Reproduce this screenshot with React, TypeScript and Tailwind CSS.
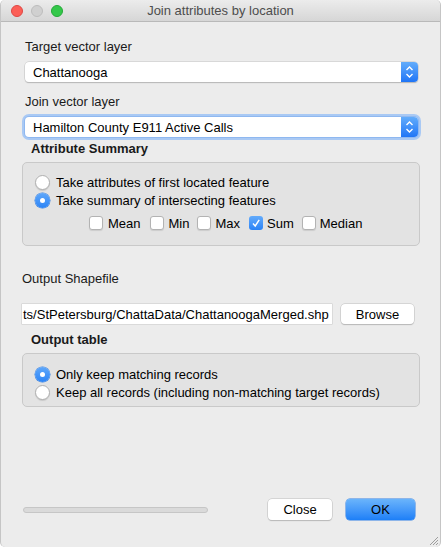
import React from "react";

const font = { fontFamily: '"Liberation Sans", Arial, sans-serif' };

function Stepper() {
  return (
    <div className="w-[17px] h-full rounded-r-[4px] bg-gradient-to-b from-[#62acfb] to-[#1f75f6] flex items-center justify-center">
      <svg width="9" height="14" viewBox="0 0 9 14">
        <path d="M1.5 5 L4.5 2 L7.5 5" fill="none" stroke="white" strokeWidth="1.4" />
        <path d="M1.5 9 L4.5 12 L7.5 9" fill="none" stroke="white" strokeWidth="1.4" />
      </svg>
    </div>
  );
}

function Combo({ text, focus }: { text: string; focus?: boolean }) {
  return (
    <div
      className={
        "h-[20px] flex items-stretch bg-white rounded-[4px] " +
        (focus
          ? "shadow-[0_0_0_1px_#8fb8f0,0_0_0_3px_#a9c9f4]"
          : "shadow-[0_0_0_0.5px_#c4c4c4,0_1px_1px_#adadad]")
      }
    >
      <div className="flex-1 pl-[8px] flex items-center text-[13px] text-black leading-none">{text}</div>
      <Stepper />
    </div>
  );
}

function Radio({ checked }: { checked?: boolean }) {
  return checked ? (
    <div className="w-[15px] h-[15px] rounded-full bg-gradient-to-b from-[#5ea7fa] to-[#2b84f6] flex items-center justify-center shadow-[0_0_0_0.5px_#3c83e0]">
      <div className="w-[5px] h-[5px] rounded-full bg-white" />
    </div>
  ) : (
    <div className="w-[15px] h-[15px] rounded-full bg-white border border-[#b0b0b0] shadow-[0_1px_1px_rgba(0,0,0,0.12)]" />
  );
}

function Check({ checked }: { checked?: boolean }) {
  return checked ? (
    <div className="w-[14px] h-[14px] rounded-[3px] bg-gradient-to-b from-[#63abfb] to-[#2a83f6] flex items-center justify-center">
      <svg width="10" height="10" viewBox="0 0 10 10">
        <path d="M2 5.5 L4.2 8 L8.2 1.8" fill="none" stroke="white" strokeWidth="1.4" />
      </svg>
    </div>
  ) : (
    <div className="w-[14px] h-[14px] rounded-[3px] bg-white border border-[#b3b3b3] shadow-[0_1px_1px_rgba(0,0,0,0.1)]" />
  );
}

function RadioRow({ checked, label }: { checked?: boolean; label: string }) {
  return (
    <div className="h-[18px] flex items-center">
      <div className="ml-[12px] w-[15px]">
        <Radio checked={checked} />
      </div>
      <span className="ml-[6px] text-[13px] text-black leading-none">{label}</span>
    </div>
  );
}

export default function App() {
  return (
    <div className="w-[442px] h-[547px] bg-white overflow-hidden" style={font}>
      <div className="relative w-[441px] h-[547px] rounded-[5px] bg-[#ececec] border-l border-r border-[#c5c5c5] flex flex-col">
        {/* title bar */}
        <div className="h-[22px] rounded-t-[5px] bg-gradient-to-b from-[#ececec] to-[#d6d6d6] border-b border-[#b9b9b9] flex items-center relative shrink-0">
          <div className="absolute left-[10px] top-[5px] flex gap-[8px]">
            <div className="w-[12px] h-[12px] rounded-full bg-[#fc5f57] border border-[#df4744]" />
            <div className="w-[12px] h-[12px] rounded-full bg-[#d0d0d0] border border-[#bdbdbd]" />
            <div className="w-[12px] h-[12px] rounded-full bg-[#34c84a] border border-[#24a938]" />
          </div>
          <div className="flex-1 text-center text-[13px] text-[#4d4d4d] leading-none">Join attributes by location</div>
        </div>

        {/* body */}
        <div className="flex flex-col pt-[17px] pl-[21px] pr-[20px]">
          <div className="pl-[3px] h-[16px] text-[13px] text-[#1a1a1a] leading-[16px]">Target vector layer</div>
          <div className="mt-[7px] pl-[3px] pr-[2px]">
            <Combo text="Chattanooga" />
          </div>
          <div className="mt-[12px] pl-[3px] h-[16px] text-[13px] text-[#1a1a1a] leading-[16px]">Join vector layer</div>
          <div className="mt-[7px] pl-[3px] pr-[2px]">
            <Combo text="Hamilton County E911 Active Calls" focus />
          </div>
          <div className="mt-[4px] pl-[9px] h-[16px] text-[13px] font-bold text-[#1a1a1a] leading-[16px]">Attribute Summary</div>
          <div className="mt-[5px] h-[84px] bg-[#e3e3e3] border border-[#c9c9c9] rounded-[5px] pt-[10px] flex flex-col">
            <RadioRow label="Take attributes of first located feature" />
            <RadioRow checked label="Take summary of intersecting features" />
            <div className="mt-[5px] h-[18px] flex items-center pl-[66px] text-[13px] text-black leading-none">
              <Check />
              <span className="ml-[5px]">Mean</span>
              <div className="ml-[9px]"><Check /></div>
              <span className="ml-[5px]">Min</span>
              <div className="ml-[8px]"><Check /></div>
              <span className="ml-[4px]">Max</span>
              <div className="ml-[9px]"><Check checked /></div>
              <span className="ml-[4px]">Sum</span>
              <div className="ml-[8px]"><Check /></div>
              <span className="ml-[4px]">Median</span>
            </div>
          </div>

          <div className="mt-[25px] h-[16px] text-[13px] text-[#1a1a1a] leading-[16px]">Output Shapefile</div>
          <div className="mt-[17px] flex items-center">
            <div className="w-[310px] h-[20px] bg-white shadow-[0_0_0_0.5px_#c8c8c8] flex items-center overflow-hidden pl-[1px]">
              <span className="whitespace-nowrap text-[13px] text-black leading-none">ts/StPetersburg/ChattaData/ChattanoogaMerged.shp</span>
            </div>
            <div className="ml-[9px] w-[73px] h-[20px] bg-white rounded-[4px] shadow-[0_0_0_0.5px_#bdbdbd,0_1px_1px_#b5b5b5] flex items-center justify-center text-[13px] text-black leading-none">Browse</div>
          </div>
          <div className="mt-[8px] pl-[9px] h-[16px] text-[13px] font-bold text-[#1a1a1a] leading-[16px]">Output table</div>
          <div className="mt-[5px] h-[54px] bg-[#e3e3e3] border border-[#c9c9c9] rounded-[5px] pt-[11px] flex flex-col">
            <RadioRow checked label="Only keep matching records" />
            <RadioRow label="Keep all records (including non-matching target records)" />
          </div>
        </div>

        <div className="flex-1" />
        {/* bottom */}
        <div className="h-[21px] mb-[27px] flex items-center pl-[22px]">
          <div className="w-[185px] h-[6px] rounded-full bg-[#dadada] border border-[#c6c6c6]" />
          <div className="ml-[60px] w-[64px] h-[21px] bg-white rounded-[4px] shadow-[0_0_0_0.5px_#bdbdbd,0_1px_1px_#b5b5b5] flex items-center justify-center text-[13px] text-black leading-none">Close</div>
          <div className="ml-[14px] w-[69px] h-[21px] rounded-[4px] bg-gradient-to-b from-[#6ab4fb] to-[#1c7ff7] shadow-[0_0_0_0.5px_#2f7fe6] flex items-center justify-center text-[13px] text-black leading-none">OK</div>
        </div>

        <svg className="absolute right-[1px] bottom-[1px]" width="11" height="11" viewBox="0 0 11 11">
          <path d="M10 2 L2 10 M10 5 L5 10 M10 8 L8 10" stroke="#8a8a8a" strokeWidth="0.8" />
        </svg>
      </div>
    </div>
  );
}
